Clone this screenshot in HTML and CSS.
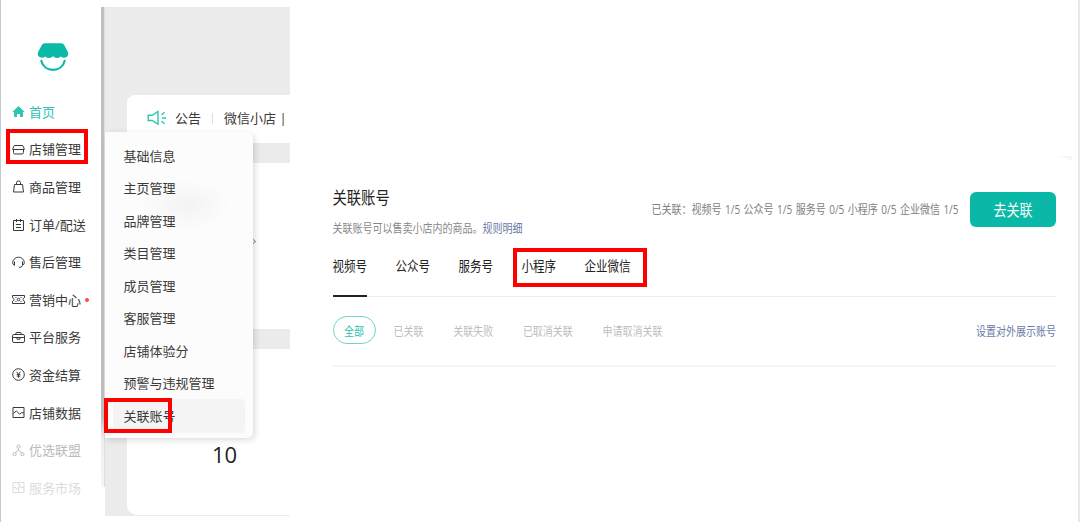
FILE: index.html
```html
<!DOCTYPE html>
<html lang="zh-CN">
<head>
    <meta charset="UTF-8">
    <meta name="viewport" content="width=device-width, initial-scale=1.0">
    <title>微信小店 - 关联账号</title>
    <link rel="stylesheet" href="styles.css">
</head>
<body>
    <div class="page">
        <aside class="sidebar">
            <svg class="logo" viewBox="0 0 32 30">
                <path d="M7.500 1.300h17q1.900 0 2.700 1.600L31 10.300q1 3.600-2 5-2.800 1.100-5.200-.9-1.600 1.500-3.900 1.500T16 14.300q-1.600 1.600-3.900 1.600t-3.900-1.500q-2.400 2-5.200.9-3-1.400-2-5L4.800 2.900Q5.600 1.300 7.500 1.300z" fill="#0abaa6"/>
                <path d="M4.300 18.800c1.300 5.700 6.100 9 11.700 9s10.400-3.300 11.700-9" fill="none" stroke="#0abaa6" stroke-width="2.200" stroke-linecap="round"/>
            </svg>
            <nav class="nav">
                <a class="nav-item active">
                    <svg class="icon" viewBox="0 0 13 13"><path d="M6.500 1L12.600 7H10.900V12H8V9H5V12H2.100V7H.4z" fill="currentColor" stroke="none"/></svg>
                    <span>首页</span>
                </a>
                <a class="nav-item boxed">
                    <svg class="icon" viewBox="0 0 13 13"><path d="M3 2.500h7q1.300 0 1.500 1.300L12.300 6.500H.7L1.500 3.800Q1.700 2.500 3 2.500zM1.500 6.500v3q0 1.500 1.500 1.500h7q1.500 0 1.500-1.500v-3"/></svg>
                    <span>店铺管理</span>
                </a>
                <a class="nav-item">
                    <svg class="icon" viewBox="0 0 13 13"><path d="M2.500 4.500h8l1 7.500h-10zM4.500 4.500V2.500q0-1.500 2-1.500t2 1.500v2"/></svg>
                    <span>商品管理</span>
                </a>
                <a class="nav-item">
                    <svg class="icon" viewBox="0 0 13 13"><path d="M1.500 2.500h10v10h-10zM4.500 1v3M8.500 1v3M4 6.500h5M4 9.500h5"/></svg>
                    <span>订单/配送</span>
                </a>
                <a class="nav-item">
                    <svg class="icon" viewBox="0 0 13 13"><path d="M2.500 9.300Q.7 8.600.7 6.800a5.800 5.600 0 0 1 11.600 0q0 1.800-1.800 2.500V5.500M2.500 9.300V5.500M10.500 9.300q-.5 2.200-3.500 2.200"/></svg>
                    <span>售后管理</span>
                </a>
                <a class="nav-item">
                    <svg class="icon" viewBox="0 0 13 13"><path d="M.5 2.500h12v2.200q-1.500.3-1.500 1.800t1.500 1.800v2.200H.5V8.300Q2 8 2 6.500T.5 4.700zM4.500 4.500h-1M8.500 4.500h1M4.500 8.500h-1M8.500 8.500h1"/><circle cx="6.500" cy="6.500" r="1.300"/></svg>
                    <span>营销中心</span>
                    <i class="dot"></i>
                </a>
                <a class="nav-item">
                    <svg class="icon" viewBox="0 0 13 13"><path d="M2 3.500h9q1.500 0 1.500 1.300v5.400q0 1.300-1.500 1.300H2Q.5 11.500.5 10.200V4.800Q.5 3.500 2 3.500zM3.500 3.500L4.300 1.500h4.400l.8 2M.5 6.500h12M5 6.500v1.700h3V6.500"/></svg>
                    <span>平台服务</span>
                </a>
                <a class="nav-item">
                    <svg class="icon" viewBox="0 0 13 13"><circle cx="6.500" cy="6.500" r="5.800"/><path d="M4.600 3.800L6.500 6.300 8.400 3.800M6.500 6.300v3.300M4.700 6.600h3.600M4.700 8.100h3.600"/></svg>
                    <span>资金结算</span>
                </a>
                <a class="nav-item">
                    <svg class="icon" viewBox="0 0 13 13"><path d="M1 1.500h11v10H1zM1.500 7.500L4.300 5l3.400 3.200 1.500-1.400H12"/></svg>
                    <span>店铺数据</span>
                </a>
                <a class="nav-item faded">
                    <svg class="icon" viewBox="0 0 13 13"><circle cx="6.500" cy="2.600" r="1.600"/><circle cx="2.600" cy="10.200" r="1.600"/><circle cx="10.400" cy="10.200" r="1.600"/><path d="M6.500 4.300v2L3.300 8.700M6.500 6.300l3.200 2.400"/></svg>
                    <span>优选联盟</span>
                </a>
                <a class="nav-item faded last">
                    <svg class="icon" viewBox="0 0 13 13"><path d="M1 1.500h11v10H1zM6.500 1.500v2h1.500v2H6.500v6M1 6.500h3v1.500h2M8 6.500h4"/></svg>
                    <span>服务市场</span>
                </a>
            </nav>
        </aside>

        <main class="shop">
            <section class="card notice">
                <svg class="horn" viewBox="0 0 20 16"><path d="M1.200 5.300h4L11 1.500v12.800L5.200 10.500h-4zM14.500 5L17.500 2.300M15 8h4M14.500 11l3 2.700"/></svg>
                <span>公告</span>
                <i class="divider"></i>
                <span class="notice-text">微信小店 |</span>
            </section>
            <section class="card banner"><span class="arrow"></span></section>
            <section class="card stats">
                <div class="count">10</div>
            </section>

            <div class="submenu">
                <a class="submenu-item">基础信息</a>
                <a class="submenu-item">主页管理</a>
                <a class="submenu-item">品牌管理</a>
                <a class="submenu-item">类目管理</a>
                <a class="submenu-item">成员管理</a>
                <a class="submenu-item">客服管理</a>
                <a class="submenu-item">店铺体验分</a>
                <a class="submenu-item">预警与违规管理</a>
                <a class="submenu-item selected">关联账号</a>
            </div>
        </main>

        <div class="account">
            <header class="account-header">
                <div class="heading">
                    <h1 class="tall">关联账号</h1>
                    <p class="tall">关联账号可以售卖小店内的商品。<a class="link">规则明细</a></p>
                </div>
                <div class="summary tall">已关联：视频号 1/5 公众号 1/5 服务号 0/5 小程序 0/5 企业微信 1/5</div>
                <button class="btn"><span class="tall">去关联</span></button>
            </header>
            <div class="tabs">
                <div class="tab current"><span class="tall">视频号</span></div>
                <div class="tab"><span class="tall">公众号</span></div>
                <div class="tab"><span class="tall">服务号</span></div>
                <div class="tab-group">
                    <div class="tab"><span class="tall">小程序</span></div>
                    <div class="tab"><span class="tall">企业微信</span></div>
                </div>
            </div>
            <div class="filters">
                <div class="pill"><span class="tall">全部</span></div>
                <span class="filter tall">已关联</span>
                <span class="filter tall">关联失败</span>
                <span class="filter tall">已取消关联</span>
                <span class="filter tall">申请取消关联</span>
                <a class="link tall setting">设置对外展示账号</a>
            </div>
            <div class="corner"></div>
        </div>
    </div>
</body>
</html>
```

FILE: styles.css
```css
*,
*::before,
*::after {
    margin: 0;
    padding: 0;
    box-sizing: border-box;
}

body {
    font-family: "Open Sans", "Noto Sans CJK SC", sans-serif;
    font-size: 13px;
    color: #3a3a3a;
    background-color: #fff;
}

.page {
    display: flex;
    height: 522px;
    border-left: 1px solid #c2cbd0;
    border-right: 2px solid #e4e9ec;
    overflow: hidden;
}

/* glyphs on the account panel are taller than wide */
.tall {
    display: inline-block;
    transform: scaleY(1.2);
    white-space: nowrap;
}

/* sidebar */
.sidebar {
    flex: 0 0 104px;
    position: relative;
    padding-top: 42px;
}

.sidebar::after {
    content: "";
    position: absolute;
    top: 7px;
    right: 0;
    width: 4px;
    height: 480px;
    border-right: 1px solid #dedede;
    background: linear-gradient(#c0c0c0 410px, #eee 430px, #f6f6f6);
}

.logo {
    display: block;
    width: 32px;
    height: 30px;
    margin-left: 36px;
}

.nav {
    margin-top: 21px;
}

.nav-item {
    display: flex;
    position: relative;
    align-items: center;
    height: 37.6px;
    padding-left: 11px;
    gap: 4px;
    white-space: nowrap;
}

.nav-item span {
    margin-top: -1px;
}

.nav-item.active {
    color: #2fc4b2;
}

.nav-item.faded {
    color: #bbb;
}

.nav-item.last {
    color: #dcdcdc;
}

.icon {
    flex: none;
    width: 13px;
    height: 13px;
    fill: none;
    stroke: currentColor;
    stroke-width: 1;
}

.dot {
    width: 4px;
    height: 4px;
    border-radius: 50%;
    background-color: #fa4b4b;
}

.nav-item.boxed::before {
    content: "";
    position: absolute;
    left: 5px;
    top: -2px;
    width: 82px;
    height: 35px;
    border: 4px solid #f00;
}

/* shop area */
.shop {
    flex: none;
    width: 184.5px;
    position: relative;
    display: flex;
    flex-direction: column;
    gap: 20px;
    height: 509px;
    margin-top: 7px;
    padding: 88px 0 1px 22px;
    background-color: #ebebeb;
}

.card {
    background-color: #fff;
}

.notice {
    display: flex;
    align-items: center;
    flex: 0 0 48px;
    padding: 0 0 2px 20px;
    border-top-left-radius: 8px;
    white-space: nowrap;
}

.notice span {
    margin-top: -1px;
}

.horn {
    flex: none;
    width: 20px;
    height: 16px;
    margin-right: 8px;
    fill: none;
    stroke: #2fc4b2;
    stroke-width: 1.4;
}

.divider {
    flex: none;
    width: 1px;
    height: 11px;
    margin: 0 11px;
    background-color: #ddd;
}

.banner {
    display: flex;
    justify-content: flex-end;
    flex: 0 0 166px;
    padding: 76px 35px 0 0;
}

.arrow {
    width: 5px;
    height: 5px;
    border: solid #999;
    border-width: 1px 1px 0 0;
    transform: rotate(45deg);
}

.stats {
    flex: 1;
    padding: 89px 0 0 85px;
    border-bottom-left-radius: 10px;
}

.count {
    font-size: 22px;
    line-height: 32px;
    color: #222;
}

.submenu {
    position: absolute;
    left: 0;
    top: 125px;
    width: 148px;
    height: 306px;
    padding: 7px 8px 0;
    border-radius: 0 6px 6px 0;
    background: radial-gradient(ellipse 44px 26px at 82px 73px, #f3f3f3, #fcfcfc);
    box-shadow: 2px 2px 6px rgba(0, 0, 0, 0.14);
}

.submenu-item {
    display: flex;
    align-items: center;
    height: 32.5px;
    padding-left: 10.5px;
}

.submenu-item.selected {
    position: relative;
    border-radius: 4px;
    background-color: #f4f4f4;
    box-shadow: 0 1px #f4f4f4;
}

.submenu-item.selected::after {
    content: "";
    position: absolute;
    left: -9px;
    top: -1px;
    width: 68px;
    height: 35px;
    border: 4px solid #f00;
}

/* account panel */
.account {
    flex: 1;
    position: relative;
    padding: 185px 22px 0 43px;
}

.account-header {
    display: flex;
}

.heading {
    flex: 1;
}

h1 {
    font-size: 14.3px;
    font-weight: 400;
    line-height: 26px;
    color: #222;
}

p {
    display: block !important;
    margin-top: 6.5px;
    font-size: 10px;
    line-height: 20px;
    color: #888;
}

.link {
    color: #6a7aa5;
}

.summary {
    height: 20px;
    margin: 14px 11.5px 0 0;
    font-size: 10px;
    line-height: 20px;
    word-spacing: 0.9px;
    color: #808080;
}

.btn {
    width: 86px;
    height: 34.5px;
    margin-top: 7px;
    border: none;
    border-radius: 6px;
    background-color: #09b8a6;
    font-family: inherit;
    font-size: 13px;
    color: #fff;
}

.tabs {
    display: flex;
    align-items: flex-start;
    gap: 28.5px;
    height: 59px;
    border-bottom: 1px solid #ececec;
}

.tab {
    height: 59px;
    padding-top: 18px;
    font-size: 11.5px;
    line-height: 20px;
    color: #222;
}

.tab.current {
    border-bottom: 2px solid #222;
}

.tab-group {
    display: flex;
    position: relative;
    gap: 28.5px;
}

.tab-group::after {
    content: "";
    position: absolute;
    left: -8.5px;
    top: 10px;
    width: 134px;
    height: 39px;
    border: 4px solid #f00;
}

.filters {
    display: flex;
    align-items: center;
    height: 70px;
    padding-bottom: 1px;
    border-bottom: 2px solid #f6f6f6;
    font-size: 10px;
}

.pill {
    display: flex;
    align-items: center;
    justify-content: center;
    width: 43px;
    height: 28px;
    margin-right: 18px;
    border: 1px solid #6fd5c9;
    border-radius: 14px;
    color: #2cc0ae;
}

.filter {
    margin-right: 29.7px;
    color: #bdbdbd;
}

.setting {
    margin-left: auto;
}

.corner {
    position: absolute;
    top: 156px;
    right: 6px;
    width: 16px;
    height: 7px;
    border-top-right-radius: 3px;
    background: linear-gradient(15deg, #fff 55%, #ebebeb);
}
```
